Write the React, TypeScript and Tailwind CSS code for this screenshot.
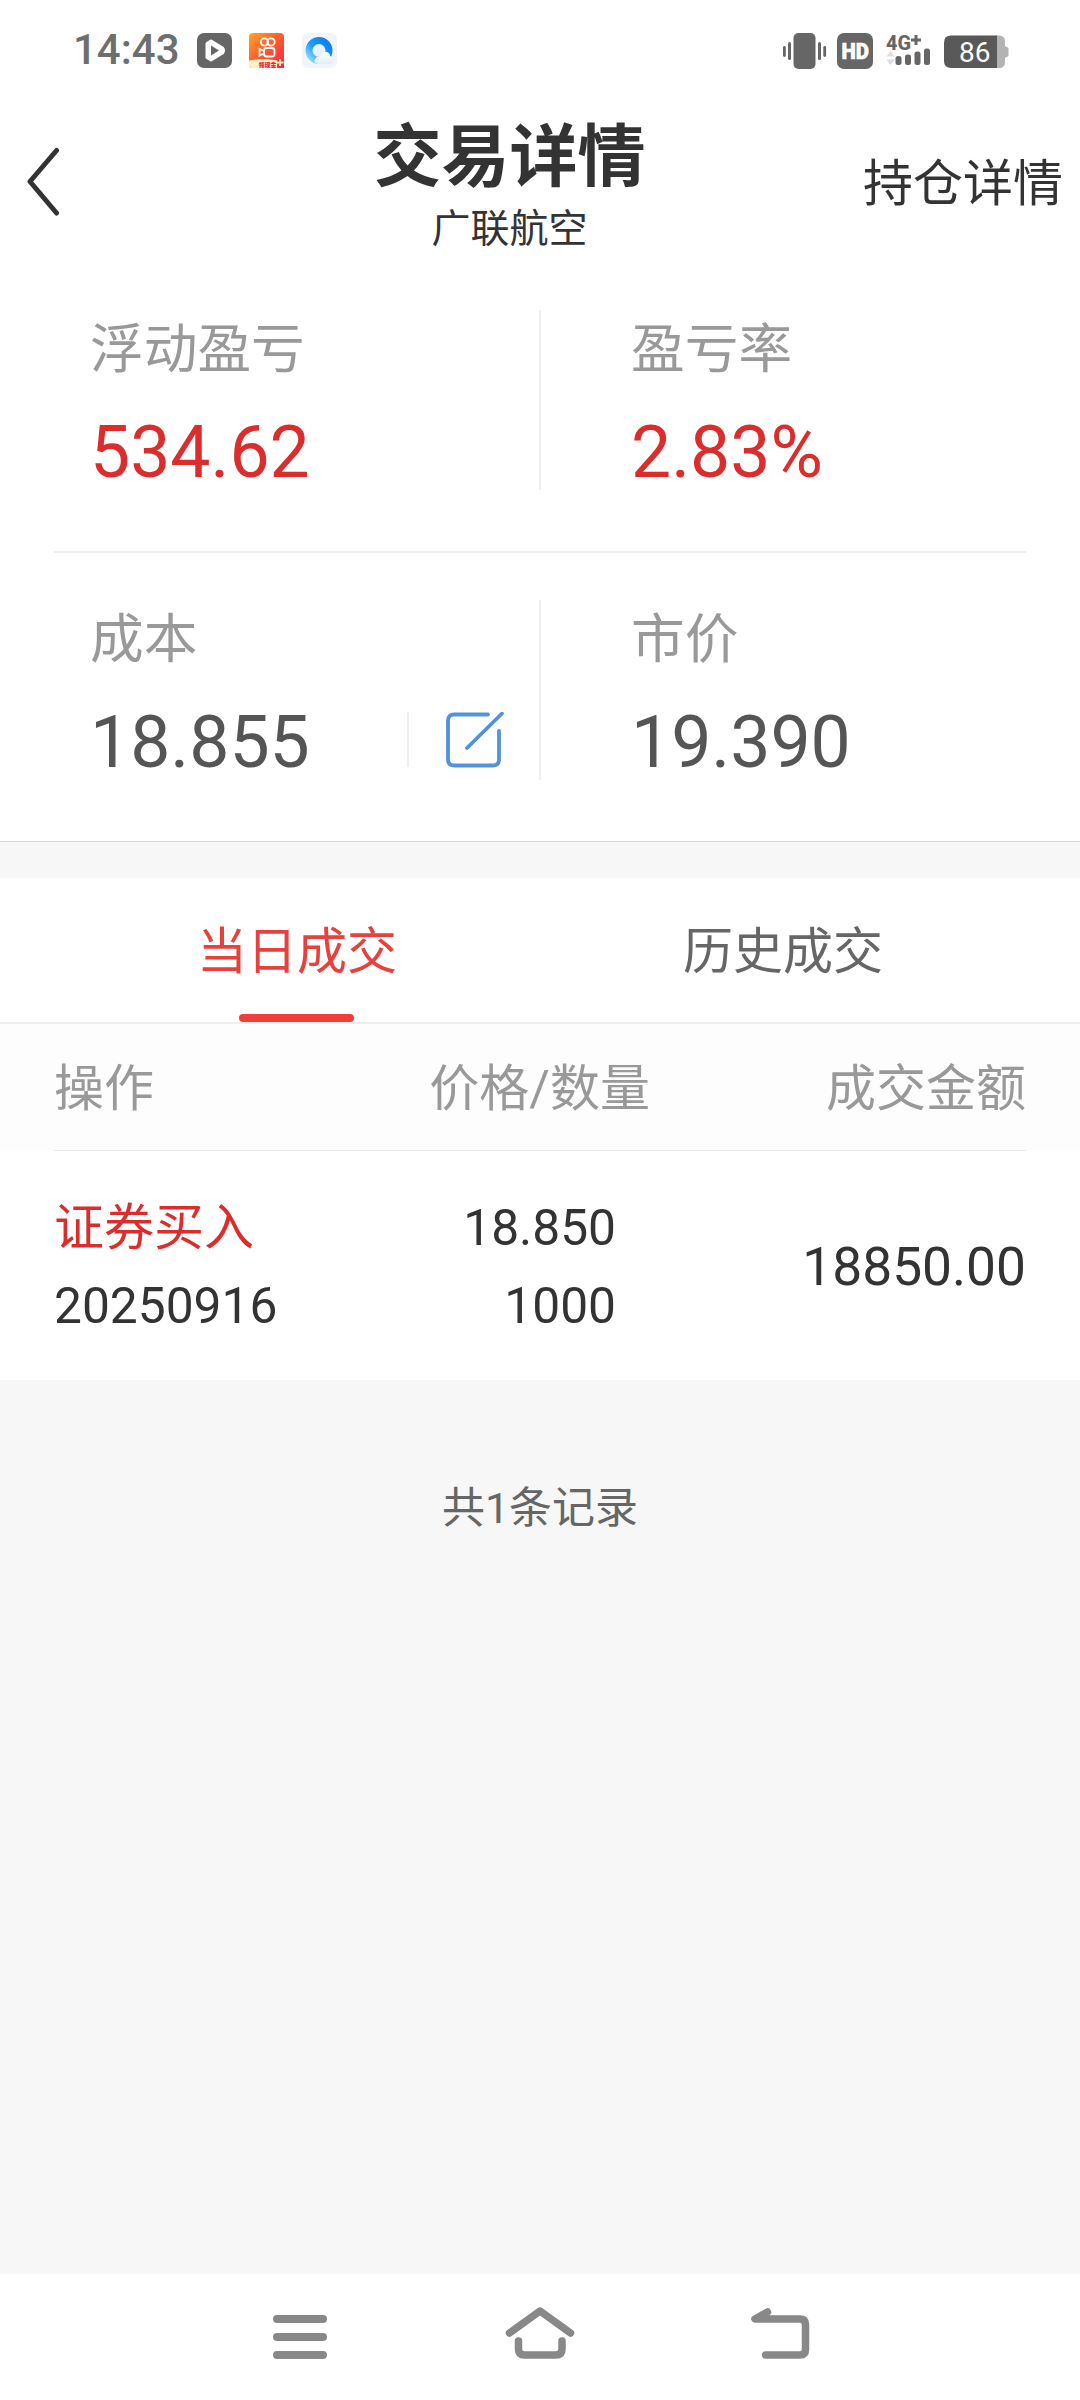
import { ReactNode, useState } from "react";

type Trade = {
  id: string;
  action: string;
  date: string;
  price: string;
  quantity: string;
  amount: string;
};

const trades: Trade[] = [
  {
    id: "1",
    action: "证券买入",
    date: "20250916",
    price: "18.850",
    quantity: "1000",
    amount: "18850.00",
  },
];

const tabs = ["当日成交", "历史成交"];

export default function App() {
  return (
    <div className="flex h-[2400px] w-[1080px] flex-col overflow-hidden bg-[#f7f7f7] font-[Roboto,'Noto_Sans_CJK_SC',sans-serif] text-[#333]">
      <StatusBar />
      <Header />
      <Summary />
      <Trades />
      <p className="mt-[96px] text-center text-[43px] leading-[64px] text-[#666]">
        共{trades.length}条记录
      </p>
      <NavigationBar />
    </div>
  );
}

const StatusBar = () => {
  return (
    <div className="flex h-[100px] shrink-0 items-start justify-between bg-white pl-[73px] pr-[71px] pt-[33px]">
      <div className="flex">
        <span className="w-[124px] pt-px text-[42px] font-medium leading-[32px] text-[#6e6e6e]">
          14:43
        </span>
        <PlayIcon />
        <KuaishouIcon />
        <BrowserIcon />
      </div>
      <div className="flex">
        <VibrateIcon />
        <HdIcon />
        <SignalIcon />
        <BatteryIcon />
      </div>
    </div>
  );
};

const Header = () => {
  return (
    <header className="flex h-[180px] shrink-0 items-start bg-white">
      <button className="w-[300px] pl-[25px] pt-[47px]">
        <svg className="block" width="36" height="70" viewBox="0 0 36 70" fill="none">
          <path
            d="M31.500 3.500L5 34.500L31.500 66"
            stroke="#333"
            strokeWidth="5"
            strokeLinecap="round"
            strokeLinejoin="round"
          />
        </svg>
      </button>
      <div className="w-[419px] text-center">
        <h1 className="pt-[18px] text-[68px] font-bold leading-[80px]">
          交易详情
        </h1>
        <p className="mt-[3px] text-[39px] leading-[56px]">广联航空</p>
      </div>
      <a className="w-[361px] pr-[17px] pt-[49px] text-right text-[50px] leading-[70px]">
        持仓详情
      </a>
    </header>
  );
};

const Summary = () => {
  return (
    <section className="h-[562px] shrink-0 border-b border-[#d9d9d9] bg-white px-[54px]">
      <div className="flex h-[273px] border-b-2 border-[#eee] pt-[30px]">
        <SummaryItem label="浮动盈亏" value="534.62" color="text-[#dc2d2d]" divider />
        <SummaryItem label="盈亏率" value="2.83%" color="text-[#dc2d2d]" />
      </div>
      <div className="flex pt-[47px]">
        <SummaryItem label="成本" value="18.855" color="text-[#555]" divider>
          <button className="ml-auto mr-[35px] mt-[9px] flex h-[55px] border-l-2 border-[#eee] pl-[35px]">
            <EditIcon />
          </button>
        </SummaryItem>
        <SummaryItem label="市价" value="19.390" color="text-[#555]" />
      </div>
    </section>
  );
};

type SummaryItemProps = {
  label: string;
  value: string;
  color: string;
  divider?: boolean;
  children?: ReactNode;
};

const SummaryItem = ({
  label,
  value,
  color,
  divider,
  children,
}: SummaryItemProps) => {
  return (
    <div
      className={`h-[180px] ${
        divider
          ? "w-[487px] border-r-2 border-[#eee] pl-[36px]"
          : "w-[485px] pl-[90px]"
      }`}
    >
      <p className="pt-[2px] text-[53.700px] leading-[76px] text-[#999]">
        {label}
      </p>
      <div className="mt-[25px] flex">
        <span className={`text-[71.500px] leading-[80px] ${color}`}>
          {value}
        </span>
        {children}
      </div>
    </div>
  );
};

const Trades = () => {
  const [selectedTab, setSelectedTab] = useState(0);

  return (
    <section className="mt-[36px] shrink-0 bg-white">
      <div className="flex h-[146px] border-b-2 border-[#eee] px-[54px]">
        {tabs.map((tab, index) => {
          const selected = index === selectedTab;

          return (
            <button
              key={tab}
              className={`flex w-[486px] flex-col items-center pt-[38px] text-[50px] leading-[72px] ${
                selected ? "text-[#e8403c]" : "text-[#666]"
              }`}
              onClick={() => setSelectedTab(index)}
            >
              {tab}
              {selected ? (
                <span className="mr-[2px] mt-[26px] h-[8px] w-[115px] rounded-full bg-[#f03e3a]" />
              ) : null}
            </button>
          );
        })}
      </div>

      <div className="bg-[#fdfdfd] px-[54px]">
        <div className="flex h-[127px] border-b border-[#eaeaea] pt-[29px] text-[50px] leading-[72px] text-[#999]">
          <span className="w-[297px]">操作</span>
          <span className="w-[299px] text-right">价格/数量</span>
          <span className="flex-1 text-right">成交金额</span>
        </div>
      </div>

      {trades.map((trade) => (
        <TradeRow key={trade.id} trade={trade} />
      ))}
    </section>
  );
};

type TradeRowProps = {
  trade: Trade;
};

const TradeRow = ({ trade }: TradeRowProps) => {
  return (
    <div className="flex h-[229px] px-[54px] pt-[38px] text-[49.700px] leading-[78px]">
      <div className="w-[297px]">
        <p className="text-[50px] text-[#dc2d2d]">{trade.action}</p>
        <p>{trade.date}</p>
      </div>
      <div className="w-[265px] text-right">
        <p>{trade.price}</p>
        <p>{trade.quantity}</p>
      </div>
      <p className="flex-1 pt-[39px] text-right text-[53.300px]">
        {trade.amount}
      </p>
    </div>
  );
};

const NavigationBar = () => {
  return (
    <nav className="mt-auto flex h-[126px] shrink-0 justify-center gap-[160px] bg-white pt-[31px]">
      <svg width="80" height="60" viewBox="260 2305 80 60" fill="none" stroke="#888" strokeWidth="8" strokeLinecap="round">
        <path d="M277 2319H323M277 2337H323M277 2355H323" />
      </svg>
      <svg width="80" height="60" viewBox="500 2305 80 60" fill="none" stroke="#888" strokeWidth="7.500" strokeLinecap="round" strokeLinejoin="round">
        <path d="M509.500 2333L540 2311L570.500 2333M518.500 2341V2349Q518.500 2355 524.500 2355H556Q562 2355 562 2349V2341" />
      </svg>
      <svg width="80" height="60" viewBox="740 2305 80 60" fill="none" stroke="#888" strokeWidth="7.500" strokeLinecap="round" strokeLinejoin="round">
        <path d="M767.500 2312L755 2319H800Q805.500 2319 805.500 2324.500V2349.500Q805.500 2355 800 2355H765.500" />
      </svg>
    </nav>
  );
};

const EditIcon = () => {
  return (
    <svg className="-mr-[2px] ml-[2px]" width="60" height="60" viewBox="0 0 60 60" fill="none" stroke="#5293d8" strokeWidth="3.800" strokeLinecap="round">
      <path d="M42 2.500H8Q2 2.500 2 8.500V47.500Q2 53.500 8 53.500H47Q53 53.500 53 47.500V19M56 1.500L21 36" />
    </svg>
  );
};

const PlayIcon = () => {
  return (
    <svg className="mr-[17px]" width="35" height="35" viewBox="0 0 35 35">
      <rect width="35" height="35" rx="7" fill="#666" />
      <path
        d="M14 8L25.500 15Q27.500 17.500 25.500 20L14 27L10 24.500V10.500Z"
        fill="#fff"
        stroke="#fff"
        strokeWidth="3"
        strokeLinejoin="round"
      />
      <path d="M14 12.500L22 17.500L14 22.500Z" fill="#666" />
    </svg>
  );
};

const KuaishouIcon = () => {
  return (
    <svg className="mr-[18px]" width="35" height="35" viewBox="0 0 35 35">
      <defs>
        <linearGradient id="kuaishou" x1="0" y1="0" x2="1" y2="1">
          <stop offset="0" stopColor="#ffa326" />
          <stop offset="0.500" stopColor="#ff5a2c" />
          <stop offset="1" stopColor="#f5254e" />
        </linearGradient>
      </defs>
      <path d="M4 0H31Q35 0 35 4V35H4Q0 35 0 31V4Q0 0 4 0Z" fill="url(#kuaishou)" />
      <g fill="none" stroke="#fff" strokeWidth="1.800">
        <circle cx="15.500" cy="9" r="3.700" />
        <circle cx="22" cy="9" r="3.700" />
        <rect x="15" y="15" width="10.500" height="8.500" rx="2.500" />
        <path d="M15 18L10.500 16V22.500L15 20.500" />
      </g>
      <path d="M0 27.500Q16 24.500 28 27.500V35H4Q0 35 0 31Z" fill="#fff0c8" />
      <text x="9.500" y="33.500" fontSize="6" fontWeight="900" fill="#e5252a" textLength="18" lengthAdjust="spacingAndGlyphs">
        领现金
      </text>
      <path d="M31 26V33M27.500 29.500H34.500" stroke="#ffe9a8" strokeWidth="2" />
    </svg>
  );
};

const BrowserIcon = () => {
  return (
    <svg width="35" height="35" viewBox="0 0 35 35">
      <defs>
        <linearGradient id="ring" x1="1" y1="0" x2="0" y2="1">
          <stop offset="0" stopColor="#0a7cf5" />
          <stop offset="0.550" stopColor="#1e9af8" />
          <stop offset="1" stopColor="#8fe0fc" />
        </linearGradient>
        <linearGradient id="cloud" x1="0" y1="0" x2="0" y2="1">
          <stop offset="0" stopColor="#fff" />
          <stop offset="1" stopColor="#dfeefb" />
        </linearGradient>
      </defs>
      <rect width="35" height="35" rx="6" fill="#f1f5fa" />
      <circle cx="17" cy="17.500" r="10" fill="#e9f2fb" stroke="url(#ring)" strokeWidth="7" />
      <path d="M16 31Q11 30 13 26Q15 23 18 24Q20 18 25 19Q28 20 28 23Q31.500 24 31.500 27.500Q31 31 27 31Z" fill="url(#cloud)" />
    </svg>
  );
};

const VibrateIcon = () => {
  return (
    <svg className="mr-[10px]" width="44" height="36" viewBox="0 0 44 36" fill="#666">
      <rect x="10.500" width="22" height="36" rx="5" />
      <rect x="0" y="13" width="2.800" height="11" rx="1.400" />
      <rect x="5" y="9" width="3" height="18" rx="1.500" />
      <rect x="35" y="9" width="3" height="18" rx="1.500" />
      <rect x="40.300" y="13" width="2.800" height="11" rx="1.400" />
    </svg>
  );
};

const HdIcon = () => {
  return (
    <svg className="mr-[13px]" width="36" height="36" viewBox="0 0 36 36">
      <rect width="36" height="36" rx="7" fill="#666" />
      <text
        x="4.500"
        y="26"
        fontSize="22.500"
        fontWeight="900"
        fill="#fff"
        stroke="#fff"
        strokeWidth="0.600"
        textLength="27.500"
        lengthAdjust="spacingAndGlyphs"
      >
        HD
      </text>
    </svg>
  );
};

const SignalIcon = () => {
  return (
    <svg className="mr-[13px] overflow-visible" width="45" height="36" viewBox="0 0 45 36" fill="#666">
      <text x="0" y="16.500" fontSize="19.500" fontWeight="800" textLength="25" lengthAdjust="spacingAndGlyphs">
        4G
      </text>
      <path d="M30 2V12M25 7H35" stroke="#666" strokeWidth="3" />
      <path d="M0.500 23.500L4.500 18L9 23.500ZM0.500 26.500H9L4.500 32Z" fill="#ddd" />
      <rect x="9.500" y="23" width="6" height="9" rx="2.500" />
      <rect x="19" y="21.500" width="6" height="10.500" rx="2.500" />
      <rect x="28.500" y="18.500" width="6" height="13.500" rx="2.500" />
      <rect x="38" y="15.500" width="6" height="16.500" rx="2.500" />
    </svg>
  );
};

const BatteryIcon = () => {
  return (
    <svg width="65" height="36" viewBox="0 0 65 36">
      <path d="M52 2.500H55Q61 2.500 61 8.500V13L64.500 15V23L61 25V29Q61 35 55 35H52Z" fill="#b3b3b3" />
      <path d="M7 2.500H53V35H7Q0 35 0 28V9.500Q0 2.500 7 2.500Z" fill="#595959" />
      <text x="15" y="29" fontSize="28" fill="#fff">
        86
      </text>
    </svg>
  );
};
